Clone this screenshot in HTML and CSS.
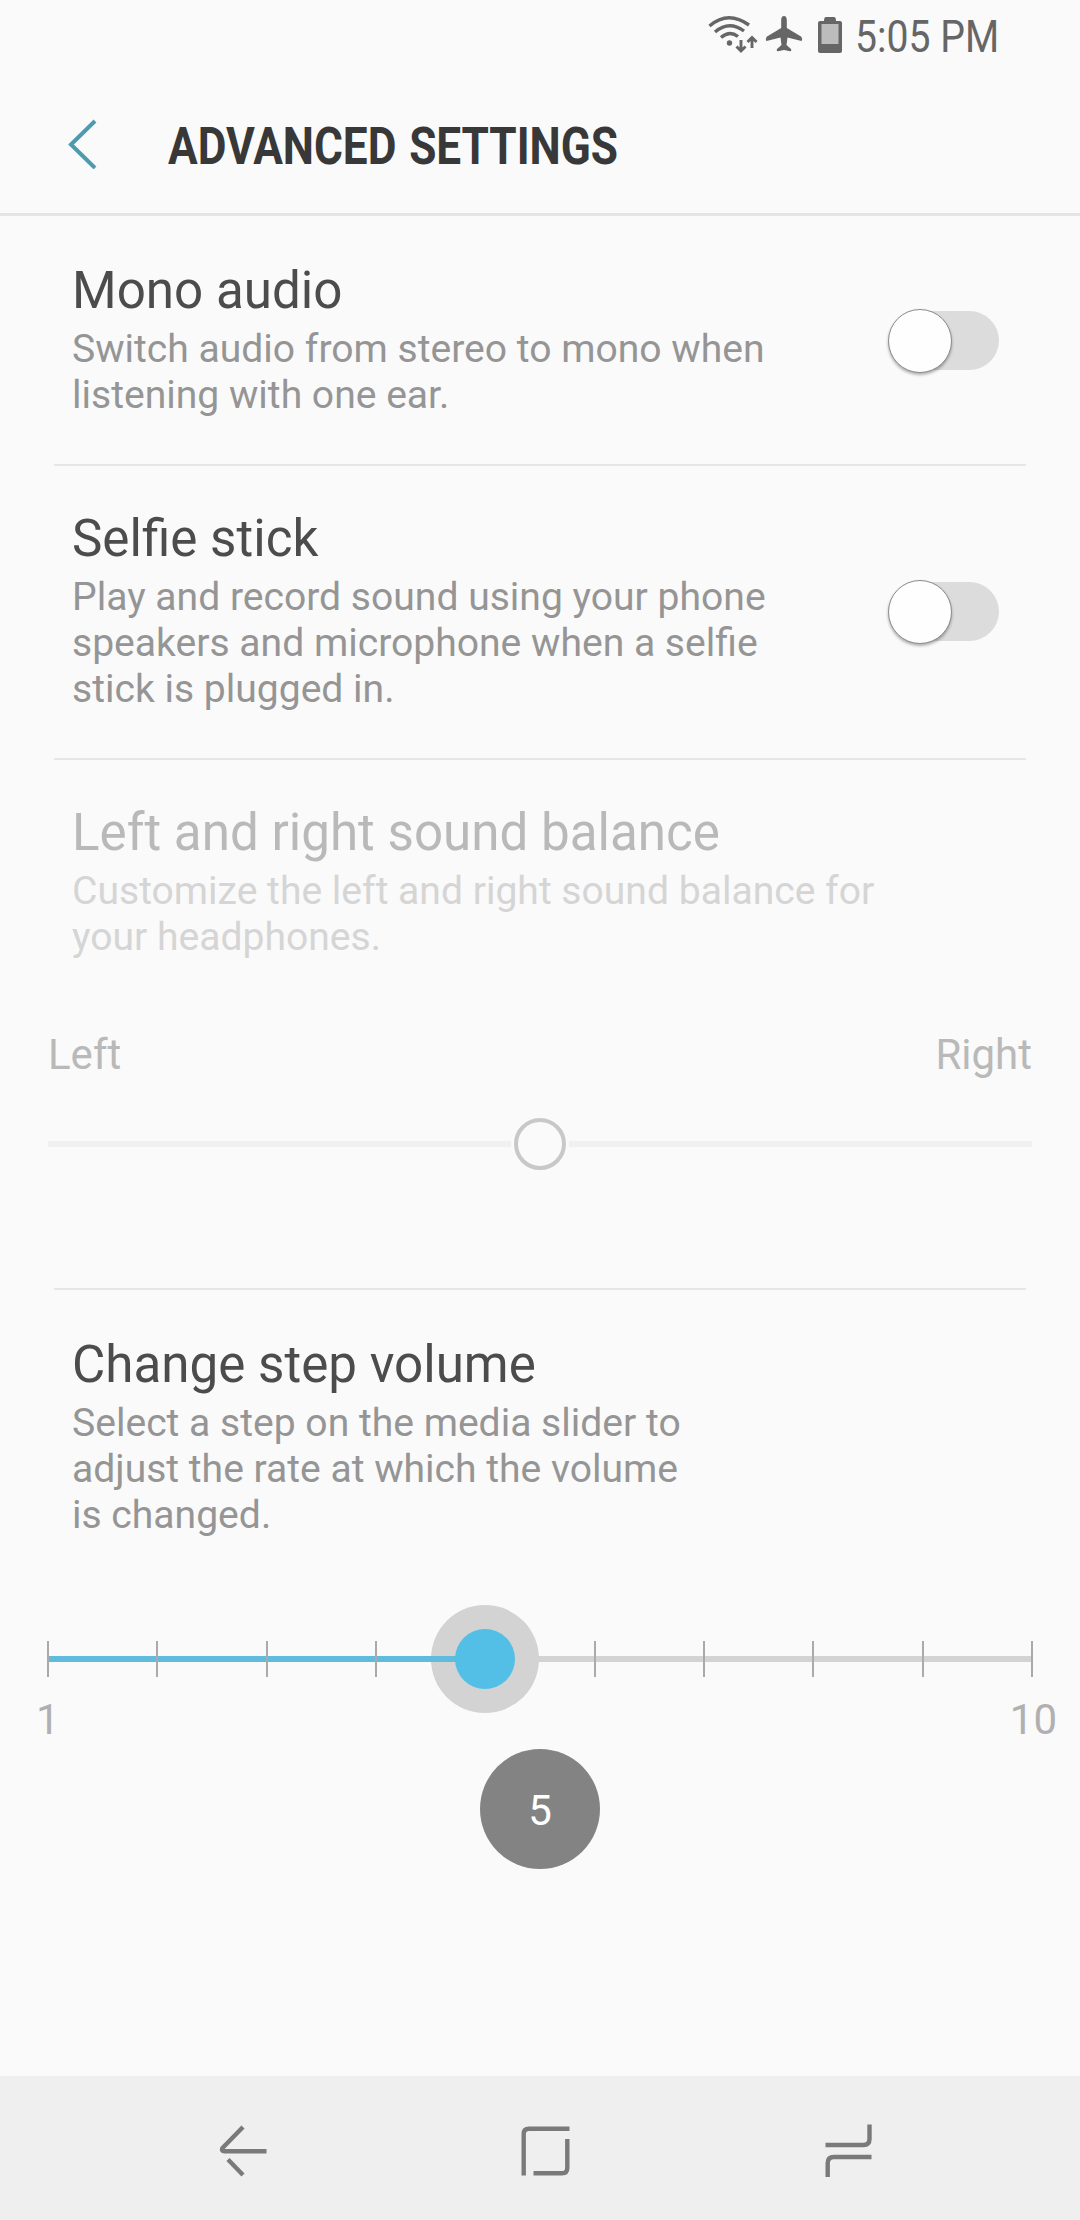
FILE: index.html
```html
<!DOCTYPE html>
<html lang="en">
<head>
    <meta charset="UTF-8">
    <meta name="viewport" content="width=device-width, initial-scale=1.0">
    <title>Advanced settings</title>
    <link rel="stylesheet" href="styles.css">
</head>
<body>
    <!-- Status bar -->
    <div class="status-bar">
        <svg class="icon-wifi" width="50" height="40" viewBox="0 0 50 40" fill="none" stroke="#666" stroke-width="3.4">
            <path d="M1.500 11 Q20 -5 41 10"/>
            <path d="M7 17 Q21 5 36 16"/>
            <path d="M13 22.500 Q21.500 15 30 21.500"/>
            <circle cx="21.500" cy="28" r="2.700" fill="#666" stroke="none"/>
            <path d="M33 25 V36 M28.500 31.500 L33 36 L37.500 31.500" stroke-width="2.900"/>
            <path d="M44 33 V22.500 M39.500 27 L44 22.500 L48.500 27" stroke-width="2.900"/>
        </svg>
        <svg class="icon-plane" width="38" height="38" viewBox="0 0 38 38" fill="#666">
            <path d="M19 1 C21 1 21.800 3 21.800 5 V13 L36 21.500 Q38 24 36.500 26 L22.500 22.500 L21.500 30 L26 34 Q27 36 25 36.200 L19 35 L13 36.200 Q11 36 12 34 L16.500 30 L15.500 22.500 L1.500 26 Q0 24 2 21.500 L16.200 13 V5 C16.200 3 17 1 19 1 Z"/>
        </svg>
        <svg class="icon-battery" width="24" height="36" viewBox="0 0 24 36">
            <path d="M8 0 H16 Q18 0 18 4 H22 Q24 4 24 6 V34 Q24 36 22 36 H2 Q0 36 0 34 V6 Q0 4 2 4 H6 Q6 0 8 0 Z" fill="#666"/>
            <rect x="3.500" y="7" width="17" height="20" fill="#bcbcbc"/>
        </svg>
        <span class="clock">5:05 PM</span>
    </div>

    <!-- Title bar -->
    <header class="title-bar">
        <svg class="back" width="30" height="50" viewBox="0 0 30 50" fill="none" stroke="#4e9bb0" stroke-width="4">
            <path d="M28 2 L4 25.500 L28 49"/>
        </svg>
        <h1>ADVANCED SETTINGS</h1>
    </header>

    <main class="settings">
        <section class="row">
            <div class="text">
                <h2>Mono audio</h2>
                <p>Switch audio from stereo to mono when<br>listening with one ear.</p>
            </div>
            <div class="switch"><span class="knob"></span></div>
        </section>

        <section class="row">
            <div class="text">
                <h2>Selfie stick</h2>
                <p>Play and record sound using your phone<br>speakers and microphone when a selfie<br>stick is plugged in.</p>
            </div>
            <div class="switch"><span class="knob"></span></div>
        </section>

        <!-- Disabled until headphones are connected -->
        <section class="row balance disabled">
            <div class="text">
                <h2>Left and right sound balance</h2>
                <p>Customize the left and right sound balance for<br>your headphones.</p>
            </div>
            <div class="labels">
                <span>Left</span>
                <span>Right</span>
            </div>
            <div class="balance-slider">
                <span class="line"></span>
                <span class="ring"></span>
                <span class="line"></span>
            </div>
        </section>

        <section class="row volume">
            <div class="text">
                <h2>Change step volume</h2>
                <p>Select a step on the media slider to<br>adjust the rate at which the volume<br>is changed.</p>
            </div>
            <div class="step-slider">
                <div class="track"></div>
                <div class="halo"></div>
                <div class="fill"></div>
                <div class="ticks">
                    <i></i><i></i><i></i><i></i><i></i><i></i><i></i><i></i><i></i><i></i>
                </div>
                <div class="thumb"></div>
            </div>
            <div class="range">
                <span>1</span>
                <span>10</span>
            </div>
            <div class="bubble">5</div>
        </section>
    </main>

    <!-- Navigation bar -->
    <nav class="nav-bar">
        <svg width="56" height="58" viewBox="0 0 56 58" fill="none" stroke="#7a7a7a" stroke-width="4.400">
            <path d="M28 6 L7.500 27 Q6 30.300 9.500 30.300 H51.500"/>
            <path d="M13 38.500 L28 54"/>
        </svg>
        <svg width="56" height="58" viewBox="0 0 56 58" fill="none" stroke="#7a7a7a" stroke-width="4.400">
            <path d="M5.700 54.500 V13 Q5.700 7.800 11 7.800 H51.500"/>
            <path d="M49.300 18 V47 Q49.300 52.300 44 52.300 H15.500"/>
        </svg>
        <svg width="56" height="58" viewBox="0 0 56 58" fill="none" stroke="#7a7a7a" stroke-width="4.400">
            <path d="M49.500 3.500 V18 Q49.500 24 43.500 24 H5.500"/>
            <path d="M7.700 56 V42 Q7.700 36 14 36 H51.500"/>
        </svg>
    </nav>
</body>
</html>
```

FILE: styles.css
```css
* {
    box-sizing: border-box;
}

body {
    margin: 0;
    height: 2220px;
    display: flex;
    flex-direction: column;
    background-color: #fafafa;
    font-family: Roboto, "Liberation Sans", sans-serif;
}

h1, h2, p {
    margin: 0;
    font-weight: 400;
    white-space: nowrap;
}

svg {
    display: block;
    flex: none;
}

/* Status bar */
.status-bar {
    display: flex;
    height: 72px;
    padding: 15px 0 0 708px;
}

.icon-plane {
    margin-left: 7px;
}

.icon-battery {
    margin: 2px 0 0 15px;
}

.clock {
    margin-left: 13px;
    font-size: 45px;
    line-height: 44px;
    color: #666;
    white-space: nowrap;
    transform: scaleX(0.87);
    transform-origin: left;
}

/* Title bar */
.title-bar {
    display: flex;
    height: 144px;
    padding: 47px 0 0 67px;
    border-bottom: 3px solid #e5e5e5;
}

.title-bar h1 {
    margin-left: 71px;
    font-size: 51px;
    font-weight: 700;
    line-height: 56px;
    color: #383838;
    word-spacing: 2px;
    transform: scaleX(0.866);
    transform-origin: left;
}

/* Settings list */
.settings {
    flex: 1;
    padding: 2px 54px 0;
}

.row {
    display: flex;
    align-items: center;
    justify-content: space-between;
    padding: 43px 27px 46px 18px;
    border-bottom: 2px solid #e6e6e6;
}

.row h2 {
    margin-bottom: 5px;
    font-size: 51.15px;
    line-height: 60px;
    color: #4c4c4c;
}

.row p {
    font-size: 39.1px;
    line-height: 46px;
    color: #959595;
}

.row.disabled h2 {
    color: #b9b9b9;
}

.row.disabled p {
    color: #d5d5d5;
}

/* Switch */
.switch {
    display: flex;
    align-items: center;
    width: 109px;
    height: 59px;
    margin: 2px 0 0 0;
    border-radius: 0 30px 30px 0;
    background: linear-gradient(to right, transparent 30px, #dcdcdc 30px);
}

.knob {
    flex: none;
    width: 64px;
    height: 64px;
    margin-left: -2px;
    border: 1px solid #8c8c8c;
    border-radius: 50%;
    background-color: #fefefe;
    box-shadow: 0 2px 3px rgba(0, 0, 0, 0.3);
}

/* Sound balance */
.balance {
    display: block;
    padding-bottom: 118px;
}

.labels {
    display: flex;
    justify-content: space-between;
    margin: 70px -33px 0 -24px;
    font-size: 42px;
    line-height: 50px;
    color: #b9b9b9;
}

.balance-slider {
    display: flex;
    align-items: center;
    gap: 3px;
    margin: 38px -33px 0 -24px;
}

.line {
    flex: 1;
    height: 6px;
    background-color: #f0f0f0;
}

.ring {
    width: 52px;
    height: 52px;
    border: 4px solid #c8c8c8;
    border-radius: 50%;
}

/* Step volume */
.volume {
    display: block;
    padding-top: 45px;
    border-bottom: 0;
}

/* Layers share one grid cell, the thumb lies over the track */
.step-slider {
    display: grid;
    align-items: center;
    height: 108px;
    margin: 67px -34px 0 -25px;
}

.step-slider > div {
    grid-area: 1 / 1;
}

.track,
.fill {
    height: 6px;
    margin: 0 1px;
    background-color: #d3d3d3;
}

.fill {
    width: 437px;
    background-color: #60bbdc;
}

.halo {
    width: 108px;
    height: 108px;
    margin-left: 384px;
    border-radius: 50%;
    background-color: #d3d3d3;
}

.ticks {
    display: flex;
    justify-content: space-between;
}

.ticks i {
    width: 2px;
    height: 36px;
    background-color: #aaa;
}

.ticks i:nth-child(5) {
    visibility: hidden;
}

.thumb {
    width: 60px;
    height: 60px;
    margin-left: 408px;
    border-radius: 50%;
    background-color: #54bfe6;
}

.range {
    display: flex;
    justify-content: space-between;
    margin: -18px -58px 0 -36px;
    font-size: 42px;
    line-height: 50px;
    color: #b0b0b0;
}

.bubble {
    width: 120px;
    height: 120px;
    margin: 4px 0 0 408px;
    border-radius: 50%;
    background-color: #838383;
    color: #fff;
    font-size: 42px;
    line-height: 123px;
    text-align: center;
}

/* Navigation bar */
.nav-bar {
    display: flex;
    justify-content: space-between;
    height: 144px;
    padding: 45px 204px 0 215px;
    background-color: #efefef;
}
```
